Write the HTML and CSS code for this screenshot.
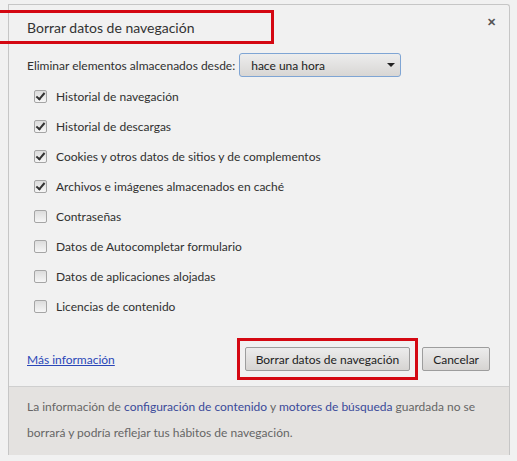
FILE: index.html
```html
<!DOCTYPE html>
<html>
  <head>
    <title>Borrar datos de navegación</title>
    <meta name="viewport" content="width=device-width, initial-scale=1" />
    <link rel="stylesheet" href="styles.css">
  </head>
  <body>
    <div class="dialog">
      <div class="header">
        <div class="title-mark">
          <h1>Borrar datos de navegación</h1>
        </div>
        <span class="close">&#x2715;</span>
      </div>
      <div class="content">
        <div class="period">
          <span>Eliminar elementos almacenados desde:</span>
          <div class="select">
            <span>hace una hora</span>
            <span class="arrow"></span>
          </div>
        </div>
        <ul class="options">
          <li><span class="check on"></span>Historial de navegación</li>
          <li><span class="check on"></span>Historial de descargas</li>
          <li><span class="check on"></span>Cookies y otros datos de sitios y de complementos</li>
          <li><span class="check on"></span>Archivos e imágenes almacenados en caché</li>
          <li><span class="check"></span>Contraseñas</li>
          <li><span class="check"></span>Datos de Autocompletar formulario</li>
          <li><span class="check"></span>Datos de aplicaciones alojadas</li>
          <li><span class="check"></span>Licencias de contenido</li>
        </ul>
        <div class="actions">
          <a href="#" class="more">Más información</a>
          <div class="buttons">
            <div class="button-mark">
              <button>Borrar datos de navegación</button>
            </div>
            <button>Cancelar</button>
          </div>
        </div>
      </div>
      <div class="footer">
        <p>La información de <a href="#">configuración de contenido</a> y <a href="#">motores de búsqueda</a> guardada no se borrará y podría reflejar tus hábitos de navegación.</p>
      </div>
    </div>
  </body>
</html>
```

FILE: styles.css
```css
html {
  font-family: Lato, "Noto Sans", Arial, sans-serif;
  font-size: 12px;
  color: #303030;
}
body {
  margin: 0;
  background-color: #f1f1f1;
}
.dialog {
  margin: 4px 0 0 8px;
  width: 500px;
  height: 450px;
  background-color: #f1f1f1;
  border: 1px solid #c6c6c6;
  border-bottom: none;
  border-radius: 0 3px 0 0;
  display: flex;
  flex-direction: column;
}
.header {
  display: flex;
  justify-content: space-between;
  align-items: flex-start;
  height: 40px;
}
.title-mark {
  margin: 5px 0 0 -9px;
  width: 244px;
  height: 28px;
  border: 3px solid #d40812;
  border-left: none;
  padding-left: 27px;
  display: flex;
  align-items: center;
}
h1 {
  margin: 0;
  font-size: 14px;
  font-weight: normal;
  color: #333;
}
.close {
  margin: 10px 13px 0 0;
  font-size: 11px;
  font-weight: bold;
  color: #555;
}
.content {
  padding: 8px 19px 0 18px;
  flex: 1;
}
.period {
  display: flex;
  align-items: center;
  gap: 4px;
}
.select {
  width: 162px;
  height: 24px;
  box-sizing: border-box;
  border: 1px solid #7fa5d4;
  border-radius: 3px;
  background: linear-gradient(#ededed, #d8d6d4);
  display: flex;
  align-items: center;
  justify-content: space-between;
  padding: 0 5px 0 11px;
  color: #222;
}
.arrow {
  width: 0;
  height: 0;
  border-left: 4px solid transparent;
  border-right: 4px solid transparent;
  border-top: 4px solid #222;
}
.options {
  list-style: none;
  margin: 4px 0 0 0;
  padding: 0 0 0 7px;
}
.options li {
  height: 30px;
  display: flex;
  align-items: center;
}
.check {
  width: 11px;
  height: 11px;
  border: 1px solid #a5a5a5;
  border-radius: 2px;
  background: linear-gradient(#dcdcdc, #f6f6f6);
  margin-right: 9px;
  position: relative;
}
.check.on::after {
  content: "";
  position: absolute;
  left: 3px;
  top: 0px;
  width: 3px;
  height: 7px;
  border: solid #333;
  border-width: 0 2px 2px 0;
  transform: rotate(40deg);
}
.actions {
  margin-top: 17px;
  display: flex;
  justify-content: space-between;
  align-items: center;
}
.more {
  color: #2a47b8;
  text-decoration: underline;
}
.buttons {
  display: flex;
  align-items: center;
  gap: 4px;
}
.button-mark {
  border: 3px solid #d40812;
  padding: 6px 5px;
}
button {
  font-family: inherit;
  font-size: 12px;
  color: #222;
  height: 24px;
  padding: 0 10px;
  border: 1px solid #9d9d9d;
  border-radius: 2px;
  background: linear-gradient(#ececec, #d6d4d2);
}
.footer {
  height: 69px;
  box-sizing: border-box;
  border-top: 1px solid #cfcfcf;
  background-color: #e4e2e0;
  padding: 7px 18px;
  color: #666;
}
.footer p {
  margin: 0;
  line-height: 26px;
}
.footer a {
  color: #3a4a9a;
  text-decoration: none;
}
```
